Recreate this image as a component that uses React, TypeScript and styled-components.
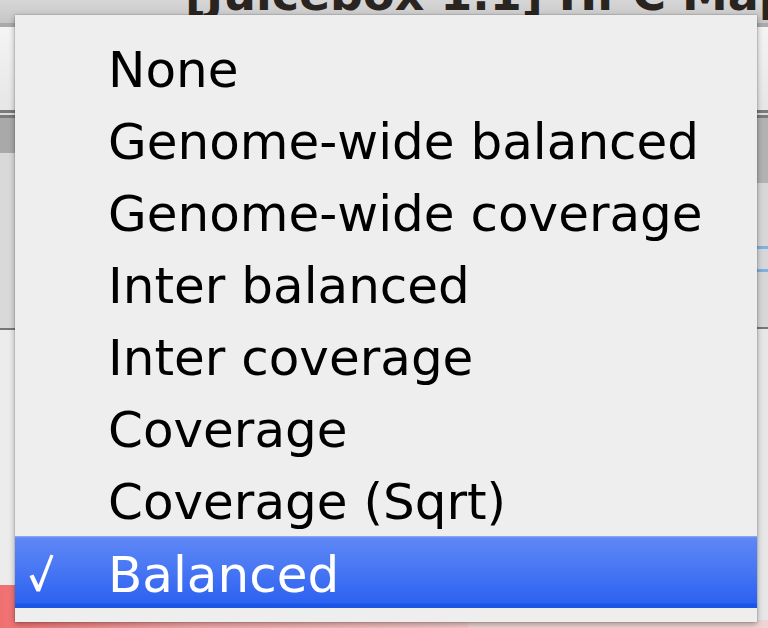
import React from "react";
import styled, { createGlobalStyle } from "styled-components";

const Global = createGlobalStyle`
  html, body { margin: 0; padding: 0; }
  body { width: 768px; height: 628px; overflow: hidden; background: #e8e8e8; }
`;

const Window = styled.div`
  position: relative;
  width: 768px;
  height: 628px;
  display: flex;
  flex-direction: column;
  overflow: hidden;
  font-family: "DejaVu Sans", "Liberation Sans", sans-serif;
`;

const TitleBar = styled.div`
  height: 23px;
  flex: none;
  display: flex;
  align-items: flex-start;
  padding-left: 185px;
  overflow: hidden;
  background: linear-gradient(#d6d6d6, #c6c6c6);
  border-bottom: 4px solid #a9a9a9;
`;

const TitleText = styled.span`
  font-size: 46px;
  font-weight: bold;
  line-height: 46px;
  margin-top: -29px;
  white-space: nowrap;
  color: #2a2420;
`;

const Toolbar = styled.div`
  height: 83px;
  flex: none;
  background: linear-gradient(#f4f4f4, #e6e6e6);
`;

const Separator = styled.div`
  height: 8px;
  flex: none;
  background: linear-gradient(#7a7a7a 0 3px, #dcdcdc 3px 5px, #7a7a7a 5px 8px);
`;

const Body = styled.div`
  flex: 1;
  display: flex;
`;

const Column = styled.div<{ $w?: number }>`
  display: flex;
  flex-direction: column;
  ${(p) => (p.$w ? `width: ${p.$w}px; flex: none;` : "flex: 1;")}
`;

const Band = styled.div<{ $h?: number; $bg: string }>`
  ${(p) => (p.$h ? `height: ${p.$h}px; flex: none;` : "flex: 1;")}
  background: ${(p) => p.$bg};
  position: relative;
`;

const Rule = styled.div`
  height: 2px;
  flex: none;
  background: #777;
`;

const BlueMark = styled.div<{ $top: number }>`
  position: absolute;
  left: 0;
  right: 0;
  top: ${(p) => p.$top}px;
  height: 3px;
  background: #7fb0e0;
`;

const Menu = styled.div`
  position: absolute;
  left: 15px;
  top: 15px;
  width: 742px;
  padding: 17px 0 14px;
  background: #eeeeee;
  box-shadow: 0 0 1px rgba(0, 0, 0, 0.45), 0 2px 6px rgba(0, 0, 0, 0.35);
  display: flex;
  flex-direction: column;
`;

const Item = styled.div<{ $selected?: boolean }>`
  height: 72px;
  display: flex;
  align-items: center;
  box-sizing: border-box;
  padding-top: 4px;
  font-size: 50px;
  color: ${(p) => (p.$selected ? "#ffffff" : "#000000")};
  background: ${(p) =>
    p.$selected
      ? "linear-gradient(#6d92f7 0px, #5d86f6 2px, #4a78f4 30px, #2c62f1 66px, #1a55e6 67px, #1a55e6 72px)"
      : "transparent"};
  border-top: ${(p) => (p.$selected ? "1px solid #87a6f5" : "none")};
`;

const CheckSlot = styled.span`
  width: 93px;
  flex: none;
  box-sizing: border-box;
  padding-left: 14px;
  display: flex;
  align-items: center;
  margin-top: -4px;
`;

const Label = styled.span`
  white-space: nowrap;
  line-height: 1;
`;

const CheckMark = () => (
  <svg width="25" height="38" viewBox="0 0 25 38" aria-hidden="true">
    <path
      d="M0.5 22 L4.5 20.5 L9.5 31 L21.5 0.5 L24.5 1.5 L11 37.5 L7.5 37.5 Z"
      fill="#ffffff"
    />
  </svg>
);

const items = [
  "None",
  "Genome-wide balanced",
  "Genome-wide coverage",
  "Inter balanced",
  "Inter coverage",
  "Coverage",
  "Coverage (Sqrt)",
  "Balanced",
];

export default function App() {
  const selected = "Balanced";
  return (
    <>
      <Global />
      <Window>
        <TitleBar>
          <TitleText>[Juicebox 1.1] Hi-C Map</TitleText>
        </TitleBar>
        <Toolbar />
        <Separator />
        <Body>
          <Column>
            <Band $h={35} $bg="#a9a9a9" />
            <Band $h={175} $bg="#d9d9d9" />
            <Rule />
            <Band $h={255} $bg="linear-gradient(90deg, #ececec, #e4e4e4)" />
            <Band $bg="linear-gradient(90deg, #f07070, #f4a8a8 40%, #f3c8c8)" />
          </Column>
          <Column $w={300}>
            <Band $h={65} $bg="#b2b2b2" />
            <Band $h={144} $bg="#d7d7d7">
              <BlueMark $top={63} />
              <BlueMark $top={86} />
            </Band>
            <Rule />
            <Band $h={291} $bg="#e7e7e7" />
            <Band $bg="#f0d4d4" />
          </Column>
        </Body>
        <Menu>
          {items.map((it) => (
            <Item key={it} $selected={it === selected}>
              <CheckSlot>{it === selected ? <CheckMark /> : null}</CheckSlot>
              <Label>{it}</Label>
            </Item>
          ))}
        </Menu>
      </Window>
    </>
  );
}
